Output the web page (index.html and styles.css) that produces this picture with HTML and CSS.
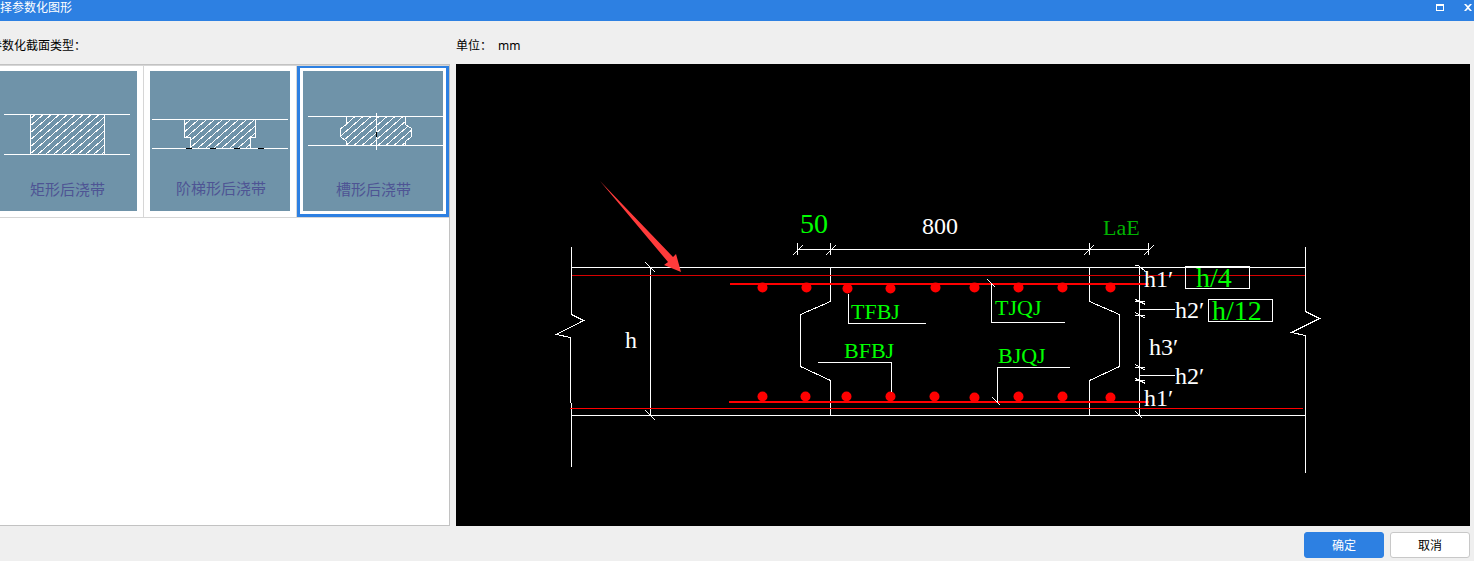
FILE: index.html
```html
<!DOCTYPE html>
<html lang="zh-CN">
<head>
<meta charset="utf-8">
<title>择参数化图形</title>
<link rel="stylesheet" href="styles.css">
</head>
<body>
<div class="dialog">
  <header class="titlebar">
    <h1 class="title">择参数化图形</h1>
    <div class="window-buttons">
      <button class="window-button" type="button" aria-label="最大化">
        <svg class="window-icon" viewBox="0 0 8 8"><path d="M0 0H8V7H0ZM1 2V6H7V2Z" fill="#fff" fill-rule="evenodd"/></svg>
      </button>
      <button class="window-button" type="button" aria-label="关闭">
        <svg class="window-icon" viewBox="0 0 8 8"><path d="M0 0H2L4 2L6 0H8L5 3.500L8 7H6L4 5L2 7H0L3 3.500Z" fill="#fff"/></svg>
      </button>
    </div>
  </header>

  <main class="content">
    <section class="types">
      <h2 class="label types-label">参数化截面类型：</h2>
      <div class="types-panel">
        <div class="thumbs">
          <button class="thumb" type="button">
            <svg class="thumb-art" viewBox="0 0 140 140" role="img" aria-label="矩形后浇带">
              <defs>
                <pattern id="hatch" width="8" height="7" patternUnits="userSpaceOnUse">
                  <path d="M-8 14L16 -7M-8 7L8 -7M0 14L16 0" stroke="#fff" fill="none" shape-rendering="crispEdges"/>
                </pattern>
              </defs>
              <rect x="33" y="43" width="75" height="41" fill="url(#hatch)"/>
              <g class="lines" transform="translate(.5 .5)"><path d="M6 43H132M6 83H132M33 43V83M107 43V83"/></g>
              <text class="thumb-text" x="33" y="124">矩形后浇带</text>
            </svg>
          </button>
          <button class="thumb" type="button">
            <svg class="thumb-art" viewBox="0 0 140 140" role="img" aria-label="阶梯形后浇带">
              <path d="M34 48H105V66H100V77H40V66H34Z" fill="url(#hatch)"/>
              <g class="lines" transform="translate(.5 .5)">
                <path d="M1 48H137M1 77H137M34 48V66H40V77M105 48V66H100V77"/>
                <path d="M35 77H41M59 77H65M83 77H89M107 77H113" stroke="#000"/>
              </g>
              <text class="thumb-text" x="26" y="123">阶梯形后浇带</text>
            </svg>
          </button>
          <button class="thumb thumb-selected" type="button" aria-pressed="true">
            <svg class="thumb-art" viewBox="0 0 140 140" role="img" aria-label="槽形后浇带">
              <path d="M43 45H102V53L108 57V65L102 70V74H43V70L37 65V57L43 53Z" fill="url(#hatch)"/>
              <g class="lines" transform="translate(.5 .5)">
                <path d="M4 45H140M4 74H140M73 41V78M43 45V53L37 57V65L43 70V74M102 45V53L108 57V65L102 70V74"/>
                <path d="M73 60V65" stroke="#000"/>
              </g>
              <text class="thumb-text" x="33" y="124">槽形后浇带</text>
            </svg>
          </button>
        </div>
      </div>
    </section>

    <section class="preview">
      <h2 class="label">单位：<span class="unit">mm</span></h2>
      <div class="canvas">
        <svg class="drawing" viewBox="456 64 1014 462" role="img" aria-label="槽形后浇带截面">
          <g class="lines" transform="translate(.5 .5)">
            <!-- slab outline and break lines -->
            <path d="M571 267H1304M571 415H1305"/>
            <path d="M571 246V314L583 320L556 334L570 337V402M571 402V466"/>
            <path d="M1305 246V311L1319 318L1291 332L1305 335V472"/>
            <!-- groove walls -->
            <path d="M830 267V301L800 314V366L830 380V415"/>
            <path d="M1089 267V301L1119 314V366L1089 380V415"/>
            <!-- dimension h -->
            <path d="M650 267V415M645 262L655 272M645 410L655 420"/>
            <!-- top dimensions -->
            <path d="M797 249H1148M797 242V254M830 242V254M1089 242V254M1148 242V254"/>
            <path d="M792 255L802 245M825 255L835 245M1083 255L1093 245M1143 255L1153 245"/>
            <!-- right dimensions -->
            <path d="M1139 267V415M1139 309H1174M1139 375H1174"/>
            <path d="M1134 265H1138L1145 271M1134 301H1144M1135 299L1145 304M1134 315H1144M1135 312L1145 318M1134 367H1144M1135 364L1145 370M1134 380H1144M1135 378L1145 383M1135 411L1142 418"/>
          </g>
          <g class="bars">
            <path d="M572 275.500H1305" stroke="#d80000"/>
            <path d="M570 408H1303" stroke-width="1"/>
            <path d="M730 284H1149M729 402H1149" stroke-width="2"/>
          </g>
          <g class="rebar">
            <circle cx="762.500" cy="287.500" r="5"/><circle cx="806.500" cy="287.500" r="5"/><circle cx="847.500" cy="288.500" r="5"/><circle cx="890.500" cy="288.500" r="5"/><circle cx="935.500" cy="287.500" r="5"/><circle cx="974.500" cy="287.500" r="5"/><circle cx="1018.500" cy="287.500" r="5"/><circle cx="1062.500" cy="287.500" r="5"/><circle cx="1110.500" cy="287.500" r="5"/>
            <circle cx="762.500" cy="396.500" r="5"/><circle cx="805.500" cy="396.500" r="5"/><circle cx="846.500" cy="396.500" r="5"/><circle cx="890.500" cy="396.500" r="5"/><circle cx="934.500" cy="396.500" r="5"/><circle cx="974.500" cy="397.500" r="5"/><circle cx="1018.500" cy="396.500" r="5"/><circle cx="1062.500" cy="396.500" r="5"/><circle cx="1110.500" cy="397.500" r="5"/>
          </g>
          <!-- leaders and value boxes -->
          <g class="lines" transform="translate(.5 .5)">
            <path d="M848 293V323H925M817 362H891V391M991 283V322H1064M987 279L995 287M1069 367H997V401M992 397L1000 405"/>
            <path d="M1185 266H1249V288H1185ZM1208 299H1272V321H1208Z"/>
          </g>
          <g class="dims">
            <text x="625" y="348">h</text>
            <text x="922" y="234">800</text>
            <text x="1144" y="287">h1′</text>
            <text x="1175" y="318">h2′</text>
            <text x="1149" y="355">h3′</text>
            <text x="1175" y="384">h2′</text>
            <text x="1144" y="406">h1′</text>
          </g>
          <g class="params">
            <text class="param-large" x="800" y="233">50</text>
            <text class="param-dim" x="1103" y="235">LaE</text>
            <text x="851" y="319">TFBJ</text>
            <text x="844" y="358">BFBJ</text>
            <text x="995" y="315">TJQJ</text>
            <text x="998" y="363">BJQJ</text>
            <text class="param-large" x="1196" y="287">h/4</text>
            <text class="param-large" x="1212" y="320">h/12</text>
          </g>
          <path d="M600 181L673 257L676 254L681 272L664 265L668 262Z" fill="#ff3b3b"/>
        </svg>
      </div>
    </section>
  </main>

  <footer class="actions">
    <button class="action action-primary" type="button">确定</button>
    <button class="action" type="button">取消</button>
  </footer>
</div>
</body>
</html>
```
FILE: styles.css
```css
* {
  box-sizing: border-box;
}

body {
  margin: 0;
  background: #efefef;
  color: #000;
  font: 12px/16px "Noto Sans", "Noto Sans CJK SC", sans-serif;
}

button {
  margin: 0;
  padding: 0;
  border: 0;
  background: none;
  font: inherit;
  color: inherit;
}

.dialog {
  display: flex;
  flex-direction: column;
  min-height: 100vh;
  overflow: hidden;
}

.titlebar {
  display: flex;
  justify-content: space-between;
  height: 21px;
  background: #2d80e2;
  color: #fff;
}

.title {
  margin: 0;
  font-size: 12px;
  line-height: 15px;
  font-weight: 400;
}

.window-buttons {
  display: flex;
  gap: 20px;
  padding: 4px 2px 0 0;
}

.window-button {
  display: flex;
  width: 8px;
  height: 8px;
}

.window-icon {
  display: block;
  width: 8px;
  height: 8px;
}

.content {
  display: flex;
  flex: 1;
  gap: 6px;
  padding-right: 4px;
}

.types,
.preview {
  display: flex;
  flex-direction: column;
}

.types {
  flex: 0 0 450px;
}

.preview {
  flex: 1;
  min-width: 0;
}

.label {
  margin: 0;
  padding: 17px 0 10px;
  font-size: 12px;
  line-height: 16px;
  font-weight: 400;
}

.types-label {
  margin-left: -10px;
}

.unit {
  margin-left: 6px;
}

.types-panel {
  flex: 1;
  overflow: hidden;
  border: 1px solid #c2c2c2;
  border-left: 0;
  background: #fff;
}

.thumbs {
  display: flex;
  margin-left: -9px;
  border-top: 1px solid #d6d6d6;
  border-bottom: 1px solid #d6d6d6;
}

.thumb {
  flex: none;
  padding: 5px 6px 6px;
  border-right: 1px solid #d6d6d6;
}

.thumb-selected {
  padding: 3px;
  border: 3px solid #2d80e2;
  border-top-width: 2px;
}

.thumb-art {
  display: block;
  width: 140px;
  height: 140px;
  background: #6f93a9;
}

.thumb-text {
  fill: #4e5494;
  font: 15px "Noto Sans CJK SC", sans-serif;
}

.lines {
  fill: none;
  stroke: #fff;
  stroke-width: 1;
  shape-rendering: crispEdges;
}

.canvas {
  flex: 1;
  background: #000;
}

.drawing {
  display: block;
  width: 100%;
}

.bars {
  fill: none;
  stroke: #f00;
  shape-rendering: crispEdges;
}

.rebar {
  fill: #f00;
}

.dims,
.params {
  font: 24px "Liberation Serif", serif;
}

.dims {
  fill: #fff;
}

.params {
  fill: #0f0;
  font-size: 22px;
}

.param-large {
  font-size: 28px;
}

.param-dim {
  fill: #00b400;
}

.actions {
  display: flex;
  justify-content: flex-end;
  gap: 6px;
  padding: 6px 4px 3px;
}

.action {
  width: 80px;
  height: 26px;
  padding-top: 1px;
  border: 1px solid #c8c8c8;
  border-radius: 3px;
  background: #fff;
}

.action-primary {
  border-color: #2d80e2;
  background: #2d80e2;
  color: #fff;
}
```
